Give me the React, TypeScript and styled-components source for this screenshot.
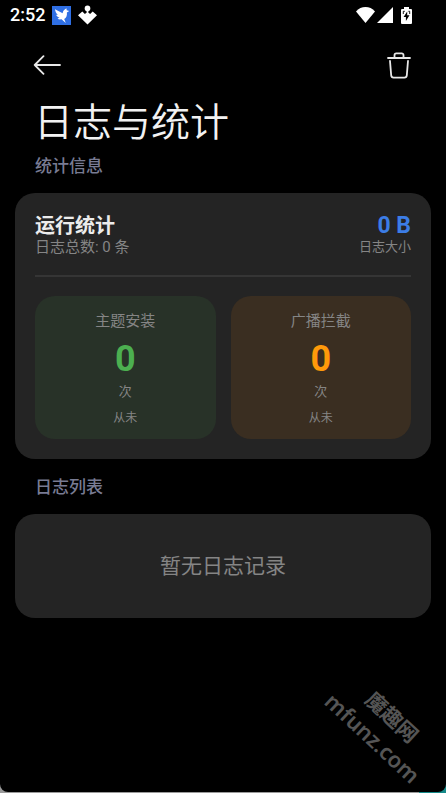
import React from "react";
import styled, { createGlobalStyle } from "styled-components";

const GlobalStyle = createGlobalStyle`
  * { box-sizing: border-box; }
  body {
    margin: 0;
    background: linear-gradient(90deg, #9a9a9a 0 94%, #168a8a 94%);
    font-family: Roboto, "Noto Sans CJK SC", sans-serif;
  }
  h1, h2, h3, p { margin: 0; }
`;

const Screen = styled.div`
  position: relative;
  display: flex;
  flex-direction: column;
  min-height: calc(100vh - 1px);
  overflow: hidden;
  background: #000;
  border-radius: 0 0 8px 8px;
`;

const StatusBar = styled.header`
  display: flex;
  align-items: center;
  justify-content: space-between;
  height: 30px;
  padding: 0 34px 0 10px;
  color: #fff;
`;

const StatusGroup = styled.div<{ $gap: number }>`
  display: flex;
  align-items: center;
  gap: ${(p) => p.$gap}px;
`;

const Clock = styled.time`
  font-size: 18px;
  line-height: 30px;
  font-weight: 500;
`;

const Toolbar = styled.nav`
  display: flex;
  align-items: center;
  justify-content: space-between;
  height: 70px;
  padding: 0 32px;
`;

const IconButton = styled.button`
  display: flex;
  align-items: center;
  justify-content: center;
  width: 30px;
  height: 32px;
  padding: 0;
  border: 0;
  background: none;
  color: #e8e8e8;
  cursor: pointer;
`;

const Title = styled.h1`
  padding: 0 34px;
  color: #f2f2f2;
  font-size: 39px;
  line-height: 46px;
  font-weight: 350;
`;

const SectionLabel = styled.h2`
  padding: 0 35px;
  color: #787b93;
  font-size: 17px;
  line-height: 24px;
  font-weight: 500;
`;

const Section = styled.section<{ $top: number }>`
  display: flex;
  flex-direction: column;
  gap: 15px;
  margin-top: ${(p) => p.$top}px;
`;

const Card = styled.div`
  margin: 0 15px;
  padding: 20px;
  border-radius: 20px;
  background: #242424;
`;

const Summary = styled.div`
  display: flex;
  justify-content: space-between;
  padding-bottom: 20px;
  border-bottom: 2px solid #353535;
`;

const SummaryColumn = styled.div<{ $end?: boolean }>`
  display: flex;
  flex-direction: column;
  align-items: ${(p) => (p.$end ? "flex-end" : "flex-start")};
`;

const CardTitle = styled.h3`
  color: #ececec;
  font-size: 20px;
  line-height: 26px;
  font-weight: 700;
`;

const SizeValue = styled.strong`
  color: #3c7de6;
  font-size: 23px;
  line-height: 26px;
  font-weight: 700;
`;

const Caption = styled.p<{ $size: number; $line: number }>`
  color: #858585;
  font-size: ${(p) => p.$size}px;
  line-height: ${(p) => p.$line}px;
`;

const Tiles = styled.div`
  display: grid;
  grid-template-columns: 1fr 1fr;
  gap: 15px;
  margin-top: 19px;
`;

const Tile = styled.div<{ $color: string }>`
  padding: 13px 12px 8px;
  border-radius: 20px;
  background: ${(p) => p.$color};
  text-align: center;
`;

const LastTime = styled(Caption)`
  margin-top: 6px;
`;

const Count = styled.strong<{ $color: string }>`
  display: block;
  color: ${(p) => p.$color};
  font-size: 36px;
  line-height: 52px;
  font-weight: 700;
`;

const Empty = styled.p`
  padding: 16px 0;
  color: #858585;
  font-size: 21px;
  line-height: 32px;
  text-align: center;
`;

const Watermark = styled.div`
  position: absolute;
  right: 4px;
  bottom: 36px;
  display: flex;
  flex-direction: column;
  align-items: center;
  color: #555;
  font-family: "Noto Sans", "Noto Sans CJK SC", sans-serif;
  font-weight: 600;
  transform: rotate(43deg);
  pointer-events: none;
`;

const WatermarkName = styled.span`
  font-size: 21px;
  line-height: 26px;
`;

const WatermarkSite = styled.span`
  font-size: 22px;
  line-height: 30px;
`;

const BirdIcon = () => (
  <svg width="19" height="19" viewBox="0 0 19 19" aria-hidden="true">
    <rect width="19" height="19" fill="#2f6fe4" />
    <path
      d="M3 3.2 10.6 7.2C11 4.8 12.4 3.4 14.4 2.2l.3 2 2.5.7-2.3 1.5c.3 3.2-.5 5.3-2.7 6.6l1.6 4-4.3-3.7c-1.6.3-3 .1-4-.6l2.1-1.1C5.8 11.2 4.7 10.2 4.1 8.8l1.7.1C4.3 7.500 3.300 5.600 3 3.200Z"
      fill="#fff"
    />
  </svg>
);

const CloverIcon = () => (
  <svg width="19" height="20" viewBox="0 0 19 20" fill="#fff" aria-hidden="true">
    <circle cx="9.5" cy="3.4" r="2.800" />
    <path d="M8.700 5h1.600v2.600l1.800 1.300 2.600-2.500L19 10.200 9.500 19.400 0 10.200l4.300-3.800 2.600 2.500 1.800-1.300Z" />
  </svg>
);

const WifiIcon = () => (
  <svg width="19" height="16" viewBox="0 0 19 16" fill="currentColor" aria-hidden="true">
    <path d="M0 4.4C5-1.3 14-1.3 19 4.4L9.5 16Z" />
  </svg>
);

const SignalIcon = () => (
  <svg width="16" height="16" viewBox="0 0 16 16" fill="currentColor" aria-hidden="true">
    <path d="M16 0v16H0Z" />
  </svg>
);

const BatteryIcon = () => (
  <svg width="11" height="17" viewBox="0 0 11 17" aria-hidden="true">
    <path d="M3 0h5v2h2a1 1 0 0 1 1 1v13a1 1 0 0 1-1 1H1a1 1 0 0 1-1-1V3a1 1 0 0 1 1-1h2Z" fill="#fff" />
    <path d="M6.2 4.5v3.8h2.300L4.900 14v-4H2.600Z" fill="#000" />
    <path d="M2.300 7V4.300h1.500M8.700 7V4.300H7.400" fill="none" stroke="#000" strokeWidth="0.9" />
  </svg>
);

const BackIcon = () => (
  <svg width="28" height="20" viewBox="0 0 28 20" fill="none" stroke="currentColor" strokeWidth="1.8" strokeLinecap="round" strokeLinejoin="round" aria-hidden="true">
    <path d="M10.5 1.2 1.7 10l8.8 8.8M1.7 10H27" />
  </svg>
);

const TrashIcon = () => (
  <svg width="24" height="27" viewBox="0 0 24 27" fill="none" stroke="currentColor" strokeWidth="1.8" strokeLinecap="round" strokeLinejoin="round" aria-hidden="true">
    <path d="M1 6h22M7.5 5.6V3.2a1.8 1.8 0 0 1 1.8-1.8h5.4a1.8 1.8 0 0 1 1.8 1.8v2.4M3 9l1.2 14.4a2.4 2.4 0 0 0 2.4 2.2h10.8a2.4 2.4 0 0 0 2.4-2.2L21 9" />
  </svg>
);

const counters = [
  { label: "主题安装", count: 0, last: "从未", color: "#4caf50", background: "#283228" },
  { label: "广播拦截", count: 0, last: "从未", color: "#ff9a0a", background: "#3a2e21" },
];

export default function App() {
  return (
    <>
      <GlobalStyle />
      <Screen>
        <StatusBar>
          <StatusGroup $gap={7}>
            <Clock>2:52</Clock>
            <BirdIcon />
            <CloverIcon />
          </StatusGroup>
          <StatusGroup $gap={8}>
            <StatusGroup $gap={2}>
              <WifiIcon />
              <SignalIcon />
            </StatusGroup>
            <BatteryIcon />
          </StatusGroup>
        </StatusBar>
        <Toolbar>
          <IconButton type="button" aria-label="返回">
            <BackIcon />
          </IconButton>
          <IconButton type="button" aria-label="清空日志">
            <TrashIcon />
          </IconButton>
        </Toolbar>
        <main>
          <Title>日志与统计</Title>
          <Section $top={8}>
            <SectionLabel>统计信息</SectionLabel>
            <Card>
              <Summary>
                <SummaryColumn>
                  <CardTitle>运行统计</CardTitle>
                  <Caption $size={15} $line={16}>日志总数: 0 条</Caption>
                </SummaryColumn>
                <SummaryColumn $end>
                  <SizeValue>0 B</SizeValue>
                  <Caption $size={13} $line={16}>日志大小</Caption>
                </SummaryColumn>
              </Summary>
              <Tiles>
                {counters.map((c) => (
                  <Tile key={c.label} $color={c.background}>
                    <Caption $size={15} $line={24}>{c.label}</Caption>
                    <Count $color={c.color}>{c.count}</Count>
                    <Caption $size={13} $line={14}>次</Caption>
                    <LastTime $size={12} $line={26}>{c.last}</LastTime>
                  </Tile>
                ))}
              </Tiles>
            </Card>
          </Section>
          <Section $top={16}>
            <SectionLabel>日志列表</SectionLabel>
            <Card>
              <Empty>暂无日志记录</Empty>
            </Card>
          </Section>
        </main>
        <Watermark>
          <WatermarkName>魔趣网</WatermarkName>
          <WatermarkSite>mfunz.com</WatermarkSite>
        </Watermark>
      </Screen>
    </>
  );
}
